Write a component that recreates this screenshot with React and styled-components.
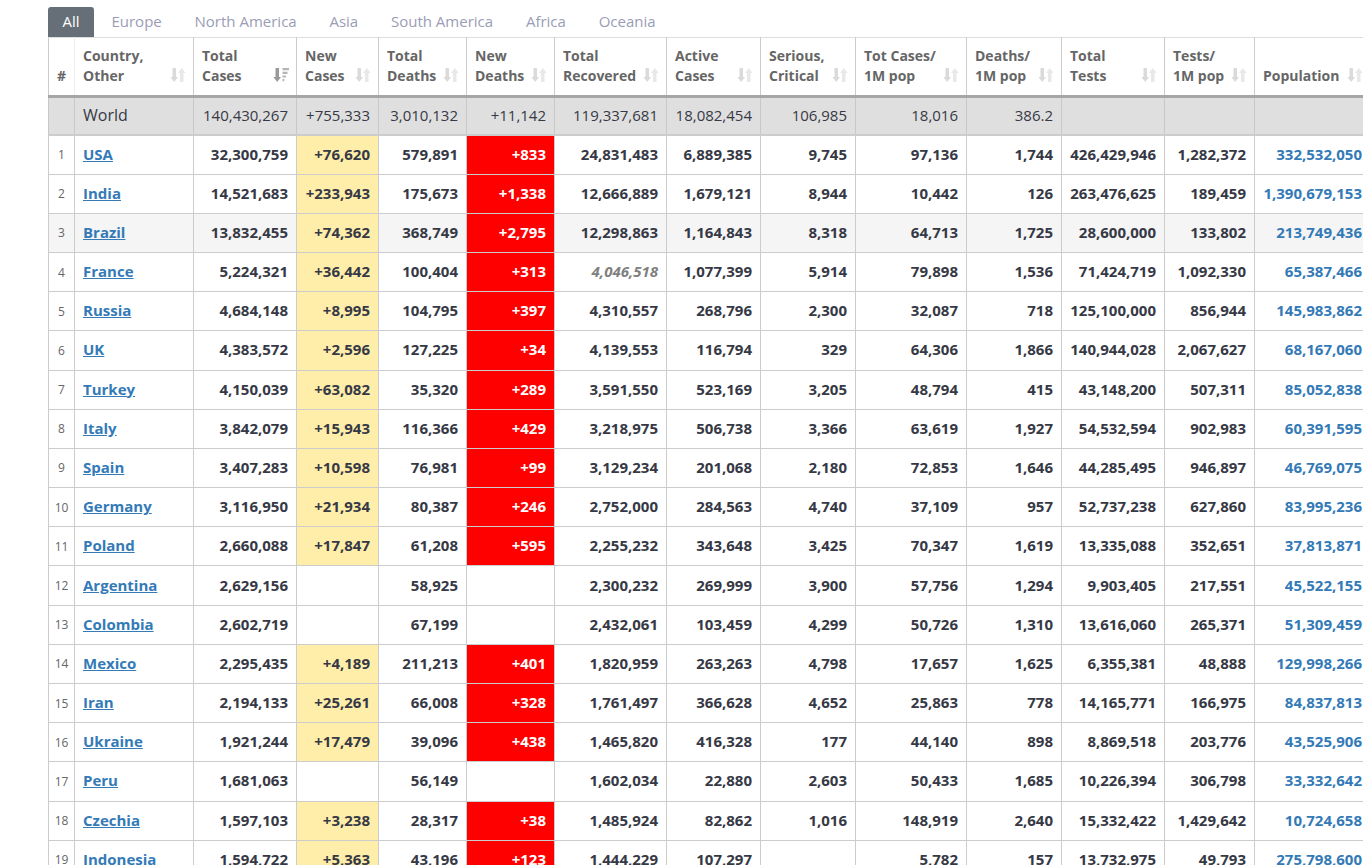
import React from 'react'
import styled, { createGlobalStyle } from 'styled-components'

const tabs = ['All', 'Europe', 'North America', 'Asia', 'South America', 'Africa', 'Oceania']

const columns = [
  { width: 26, label: ['#'], noSort: true, center: true },
  { width: 119, label: ['Country,', 'Other'] },
  { width: 103, label: ['Total', 'Cases'], active: true },
  { width: 82, label: ['New', 'Cases'] },
  { width: 88, label: ['Total', 'Deaths'] },
  { width: 88, label: ['New', 'Deaths'] },
  { width: 112, label: ['Total', 'Recovered'] },
  { width: 94, label: ['Active', 'Cases'] },
  { width: 95, label: ['Serious,', 'Critical'] },
  { width: 111, label: ['Tot Cases/', '1M pop'] },
  { width: 95, label: ['Deaths/', '1M pop'] },
  { width: 103, label: ['Total', 'Tests'] },
  { width: 90, label: ['Tests/', '1M pop'] },
  { width: 116, label: ['Population'] },
]

const world = ['World', '140,430,267', '+755,333', '3,010,132', '+11,142', '119,337,681', '18,082,454', '106,985', '18,016', '386.2', '', '', '']

const rows = [
  ['USA', '32,300,759', '+76,620', '579,891', '+833', '24,831,483', '6,889,385', '9,745', '97,136', '1,744', '426,429,946', '1,282,372', '332,532,050'],
  ['India', '14,521,683', '+233,943', '175,673', '+1,338', '12,666,889', '1,679,121', '8,944', '10,442', '126', '263,476,625', '189,459', '1,390,679,153'],
  ['Brazil', '13,832,455', '+74,362', '368,749', '+2,795', '12,298,863', '1,164,843', '8,318', '64,713', '1,725', '28,600,000', '133,802', '213,749,436'],
  ['France', '5,224,321', '+36,442', '100,404', '+313', '4,046,518', '1,077,399', '5,914', '79,898', '1,536', '71,424,719', '1,092,330', '65,387,466'],
  ['Russia', '4,684,148', '+8,995', '104,795', '+397', '4,310,557', '268,796', '2,300', '32,087', '718', '125,100,000', '856,944', '145,983,862'],
  ['UK', '4,383,572', '+2,596', '127,225', '+34', '4,139,553', '116,794', '329', '64,306', '1,866', '140,944,028', '2,067,627', '68,167,060'],
  ['Turkey', '4,150,039', '+63,082', '35,320', '+289', '3,591,550', '523,169', '3,205', '48,794', '415', '43,148,200', '507,311', '85,052,838'],
  ['Italy', '3,842,079', '+15,943', '116,366', '+429', '3,218,975', '506,738', '3,366', '63,619', '1,927', '54,532,594', '902,983', '60,391,595'],
  ['Spain', '3,407,283', '+10,598', '76,981', '+99', '3,129,234', '201,068', '2,180', '72,853', '1,646', '44,285,495', '946,897', '46,769,075'],
  ['Germany', '3,116,950', '+21,934', '80,387', '+246', '2,752,000', '284,563', '4,740', '37,109', '957', '52,737,238', '627,860', '83,995,236'],
  ['Poland', '2,660,088', '+17,847', '61,208', '+595', '2,255,232', '343,648', '3,425', '70,347', '1,619', '13,335,088', '352,651', '37,813,871'],
  ['Argentina', '2,629,156', '', '58,925', '', '2,300,232', '269,999', '3,900', '57,756', '1,294', '9,903,405', '217,551', '45,522,155'],
  ['Colombia', '2,602,719', '', '67,199', '', '2,432,061', '103,459', '4,299', '50,726', '1,310', '13,616,060', '265,371', '51,309,459'],
  ['Mexico', '2,295,435', '+4,189', '211,213', '+401', '1,820,959', '263,263', '4,798', '17,657', '1,625', '6,355,381', '48,888', '129,998,266'],
  ['Iran', '2,194,133', '+25,261', '66,008', '+328', '1,761,497', '366,628', '4,652', '25,863', '778', '14,165,771', '166,975', '84,837,813'],
  ['Ukraine', '1,921,244', '+17,479', '39,096', '+438', '1,465,820', '416,328', '177', '44,140', '898', '8,869,518', '203,776', '43,525,906'],
  ['Peru', '1,681,063', '', '56,149', '', '1,602,034', '22,880', '2,603', '50,433', '1,685', '10,226,394', '306,798', '33,332,642'],
  ['Czechia', '1,597,103', '+3,238', '28,317', '+38', '1,485,924', '82,862', '1,016', '148,919', '2,640', '15,332,422', '1,429,642', '10,724,658'],
  ['Indonesia', '1,594,722', '+5,363', '43,196', '+123', '1,444,229', '107,297', '', '5,782', '157', '13,732,975', '49,793', '275,798,600'],
]

const SortIcon = ({ active }) => (
  <SortSvg viewBox="0 0 16 16" aria-hidden="true">
    <path
      d="M2.500 1h3.500v9h2L4.200 15 .4 10h2.100z"
      fill={active ? '#9a9a9a' : '#dadada'}
    />
    {active ? (
      <path d="M9.500 1h6.500v2.200H9.500zM9.500 4.700h5v2.200h-5zM9.500 8.400h3.400v2.200H9.500zM9.500 12h1.800v2.200H9.500z" fill="#b5b5b5" />
    ) : (
      <path d="M10 15V6H8l3.800-5 3.800 5h-2.100v9z" fill="#e8e8e8" />
    )}
  </SortSvg>
)

const App = () => {
  return (
    <>
      <GlobalStyle />
      <Page>
        <TabBar>
          {tabs.map((tab, index) => (
            <Tab key={tab} $active={index === 0}>{tab}</Tab>
          ))}
        </TabBar>
        <Table>
          <colgroup>
            {columns.map((col, index) => (
              <col key={index} style={{ width: col.width }} />
            ))}
          </colgroup>
          <thead>
            <tr>
              {columns.map((col, index) => (
                <HeadCell key={index} $center={col.center}>
                  {col.label.map((line, i) => (
                    <HeadLine key={i}>{line}</HeadLine>
                  ))}
                  {!col.noSort && <SortIcon active={col.active} />}
                </HeadCell>
              ))}
            </tr>
          </thead>
          <tbody>
            <WorldRow>
              <WorldCell />
              {world.map((value, index) => (
                <WorldCell key={index} $name={index === 0}>{value}</WorldCell>
              ))}
            </WorldRow>
            {rows.map((row, rowIndex) => (
              <Row key={row[0]} $shaded={row[0] === 'Brazil'}>
                <RankCell>{rowIndex + 1}</RankCell>
                <Cell $left>
                  <CountryLink href="#">{row[0]}</CountryLink>
                </Cell>
                {row.slice(1).map((value, index) => {
                  if (index === 1) return <NewCasesCell key={index} $filled={!!value}>{value}</NewCasesCell>
                  if (index === 3) return <NewDeathsCell key={index} $filled={!!value}>{value}</NewDeathsCell>
                  if (index === 11) return <PopulationCell key={index}>{value}</PopulationCell>
                  if (index === 4 && row[0] === 'France') return <EstimateCell key={index}>{value}</EstimateCell>
                  return <Cell key={index}>{value}</Cell>
                })}
              </Row>
            ))}
          </tbody>
        </Table>
      </Page>
    </>
  )
}

const GlobalStyle = createGlobalStyle`
  html, body {
    margin: 0;
    height: 865px;
    overflow: hidden;
    background: #fff;
  }
  body {
    font-family: "Open Sans", "Liberation Sans", sans-serif;
    color: #363945;
  }
`

const Page = styled.div`
  padding: 7px 0 0 48px;
  width: 1420px;
`

const TabBar = styled.div`
  display: flex;
  height: 30px;
`

const Tab = styled.div`
  height: 30px;
  box-sizing: border-box;
  padding: 4px ${(p) => (p.$active ? '14px' : '16.400px')} 0 ${(p) => (p.$active ? '14.500px' : '16.400px')};
  font-size: 15px;
  line-height: 20px;
  border-radius: 3px 3px 0 0;
  color: ${(p) => (p.$active ? '#fff' : '#9a9db5')};
  background: ${(p) => (p.$active ? '#666f78' : 'transparent')};
  margin-right: ${(p) => (p.$active ? '1.500px' : '0')};
`

const Table = styled.table`
  border-collapse: collapse;
  table-layout: fixed;
  width: 1322px;
  font-size: 15px;
`

const HeadCell = styled.th`
  position: relative;
  height: 57px;
  box-sizing: border-box;
  padding: 8px 8px 9px;
  border: 1px solid #ccc;
  border-top-color: #ddd;
  border-right-color: ${(p) => (p.$center ? '#eee' : '#ccc')};
  border-bottom: 3px solid #a6a6a6;
  text-align: ${(p) => (p.$center ? 'center' : 'left')};
  vertical-align: bottom;
  font-size: 14px;
  line-height: 20px;
  font-weight: 700;
  color: #666;
`

const HeadLine = styled.div`
  white-space: nowrap;
`

const SortSvg = styled.svg`
  position: absolute;
  right: 7px;
  bottom: 12px;
  width: 16px;
  height: 16px;
`

const WorldRow = styled.tr`
  height: 38.400px;
  background: #dfdfdf;
`

const WorldCell = styled.td`
  padding: 0 8px 2px;
  border: 1px solid #c8c8c8;
  border-bottom: 2px solid #ccc;
  text-align: ${(p) => (p.$name ? 'left' : 'right')};
  font-size: ${(p) => (p.$name ? '16px' : '15px')};
  white-space: nowrap;
  color: #363945;
`

const Row = styled.tr`
  height: 39.200px;
  background: ${(p) => (p.$shaded ? '#f5f5f5' : '#fff')};
`

const Cell = styled.td`
  padding: 0 8px 2px;
  border: 1px solid #ccc;
  text-align: ${(p) => (p.$left ? 'left' : 'right')};
  font-weight: 700;
  white-space: nowrap;
  color: #363945;
`

const RankCell = styled(Cell)`
  padding: 0;
  text-align: center;
  font-size: 12px;
  font-weight: 400;
  color: #666;
`

const CountryLink = styled.a`
  color: #337ab7;
  font-weight: 700;
  text-decoration: underline;
`

const NewCasesCell = styled(Cell)`
  background: ${(p) => (p.$filled ? '#ffeeaa' : 'transparent')};
`

const NewDeathsCell = styled(Cell)`
  background: ${(p) => (p.$filled ? '#ff0000' : 'transparent')};
  color: #fff;
`

const PopulationCell = styled(Cell)`
  color: #337ab7;
`

const EstimateCell = styled(Cell)`
  font-style: italic;
  color: #808080;
`

export default App
